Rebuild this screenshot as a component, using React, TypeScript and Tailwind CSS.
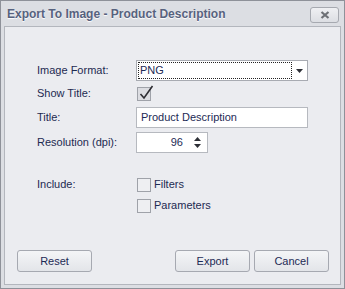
import React from "react";

const font = { fontFamily: '"Liberation Sans", Arial, sans-serif' };

function Check({ checked }: { checked?: boolean }) {
  return (
    <div
      className={`relative w-[14px] h-[14px] border border-[#9fa2a9] shrink-0 ${
        checked ? "bg-[#dcdde2]" : "bg-[#eeeff2]"
      }`}
    >
      {checked && (
        <svg className="absolute left-[1px] top-[-3px]" width="16" height="16" viewBox="0 0 16 16">
          <path d="M1.5 9 L5 13 L13.5 1" fill="none" stroke="#2e2e33" strokeWidth="1.6" />
        </svg>
      )}
    </div>
  );
}

function Btn({ children, className = "" }: { children: React.ReactNode; className?: string }) {
  return (
    <div
      className={`w-[75px] h-[22px] border border-[#a6a9b1] rounded-[3px] bg-gradient-to-b from-[#f4f5f7] to-[#e3e5e9] flex items-center justify-center text-[11px] text-[#1d2a55] ${className}`}
    >
      {children}
    </div>
  );
}

export default function App() {
  return (
    <div style={font} className="w-[345px] h-[289px] border border-[#8e9199] bg-[#dcdee3] flex flex-col text-[11px] text-[#1d2a50]">
      <div className="h-[25px] flex items-center justify-between pl-[6px] pr-[5px] shrink-0">
        <span className="font-bold text-[12px] text-[#57627e] mt-[1px]" style={{ textShadow: "0 1px 1px #ffffff" }}>
          Export To Image - Product Description
        </span>
        <div className="w-[29px] h-[16px] border border-[#a6a9b0] rounded-[3px] bg-gradient-to-b from-[#eff0f3] to-[#dcdee3] flex items-center justify-center mt-[2px]">
          <svg width="10" height="8" viewBox="0 0 10 8">
            <path d="M1.5 1 L8.5 7 M8.5 1 L1.5 7" stroke="#6d7076" strokeWidth="2.2" />
          </svg>
        </div>
      </div>
      <div className="flex-1 mx-[3px] mb-[3px] border border-[#b3b6bd] bg-[#ebecf0] flex flex-col">
        <div className="pl-[32px] mt-[33px] flex flex-col">
          <div className="flex items-center h-[21px]">
            <span className="w-[99px]">Image Format:</span>
            <div className="w-[172px] h-[21px] border border-[#a8abb2] bg-white flex items-center">
              <div className="flex-1 h-[17px] ml-[1px] border border-dotted border-[#222] flex items-center pl-[1px] text-[#1d2a55]">
                PNG
              </div>
              <div className="w-[15px] flex items-center justify-center">
                <svg width="7" height="4" viewBox="0 0 7 4">
                  <path d="M0 0 H7 L3.5 4 Z" fill="#2d2f36" />
                </svg>
              </div>
            </div>
          </div>
          <div className="flex items-center h-[21px] mt-[2px]">
            <span className="w-[100px]">Show Title:</span>
            <Check checked />
          </div>
          <div className="flex items-center h-[21px] mt-[3px]">
            <span className="w-[99px]">Title:</span>
            <div className="w-[172px] h-[21px] border border-[#b6b9bf] bg-white flex items-center pl-[4px] text-[#1d2a55]">
              Product Description
            </div>
          </div>
          <div className="flex items-center h-[21px] mt-[4px]">
            <span className="w-[99px]">Resolution (dpi):</span>
            <div className="w-[72px] h-[21px] border border-[#b6b9bf] bg-white flex items-center justify-end text-[#1d2a55]">
              <span className="mr-[8px]">96</span>
              <div className="w-[12px] mr-[4px] flex flex-col items-center gap-[3px]">
                <svg width="7" height="4" viewBox="0 0 7 4">
                  <path d="M0 4 H7 L3.5 0 Z" fill="#2d2f36" />
                </svg>
                <svg width="7" height="4" viewBox="0 0 7 4">
                  <path d="M0 0 H7 L3.5 4 Z" fill="#2d2f36" />
                </svg>
              </div>
            </div>
          </div>
          <div className="flex mt-[21px]">
            <span className="w-[100px] h-[21px] flex items-center">Include:</span>
            <div className="flex flex-col">
              <div className="flex items-center h-[21px] gap-[3px]">
                <Check />
                <span>Filters</span>
              </div>
              <div className="flex items-center h-[21px] gap-[3px]">
                <Check />
                <span>Parameters</span>
              </div>
            </div>
          </div>
        </div>
        <div className="mt-auto mb-[12px] flex items-center pl-[12px] pr-[11px]">
          <Btn>Reset</Btn>
          <div className="flex-1" />
          <Btn>Export</Btn>
          <Btn className="ml-[4px]">Cancel</Btn>
        </div>
      </div>
    </div>
  );
}
